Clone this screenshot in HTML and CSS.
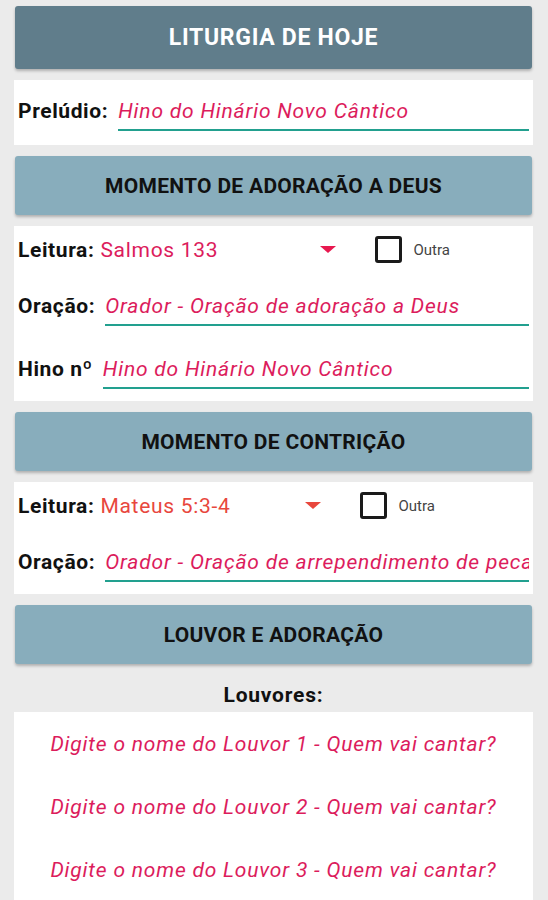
FILE: index.html
```html
<!doctype html>
<html>
    <head>
        <meta charset="utf-8">
        <title>Liturgia de Hoje</title>
        <link rel="stylesheet" href="styles.css">
    </head>
    <body>
        <div class="page">
            <div class="bar bar-main">LITURGIA DE HOJE</div>

            <div class="card">
                <div class="field-row first">
                    <span class="label">Prelúdio:</span>
                    <input class="field" type="text" value="Hino do Hinário Novo Cântico">
                </div>
            </div>

            <div class="bar">MOMENTO DE ADORAÇÃO A DEUS</div>

            <div class="card">
                <div class="row">
                    <span class="label">Leitura:</span>
                    <div class="spinner wide">
                        <span>Salmos 133</span>
                        <i class="arrow"></i>
                    </div>
                    <span class="check"></span>
                    <span class="check-text">Outra</span>
                </div>
                <div class="field-row">
                    <span class="label">Oração:</span>
                    <input class="field" type="text" value="Orador - Oração de adoração a Deus">
                </div>
                <div class="field-row">
                    <span class="label">Hino nº</span>
                    <input class="field" type="text" value="Hino do Hinário Novo Cântico">
                </div>
            </div>

            <div class="bar">MOMENTO DE CONTRIÇÃO</div>

            <div class="card">
                <div class="row">
                    <span class="label">Leitura:</span>
                    <div class="spinner narrow orange">
                        <span>Mateus 5:3-4</span>
                        <i class="arrow"></i>
                    </div>
                    <span class="check"></span>
                    <span class="check-text">Outra</span>
                </div>
                <div class="field-row">
                    <span class="label">Oração:</span>
                    <input class="field" type="text" value="Orador - Oração de arrependimento de pecados">
                </div>
            </div>

            <div class="bar">LOUVOR E ADORAÇÃO</div>
            <div class="sub-title">Louvores:</div>

            <div class="card songs">
                <input class="song" type="text" value="Digite o nome do Louvor 1 - Quem vai cantar?">
                <input class="song" type="text" value="Digite o nome do Louvor 2 - Quem vai cantar?">
                <input class="song" type="text" value="Digite o nome do Louvor 3 - Quem vai cantar?">
            </div>
        </div>
    </body>
</html>
```
FILE: styles.css
```css
*{margin:0;padding:0;box-sizing:border-box;}
body{
    background:#ebebeb;
    font-family:Roboto,"Liberation Sans",sans-serif;
    color:#111;
}
.page{
    width:519px;
    margin-left:14px;
    padding-top:6px;
}
.bar{
    height:59px;
    margin:0 1px 11px;
    background:#88adbc;
    border-radius:3px;
    box-shadow:0 2px 3px rgba(0,0,0,0.25);
    display:flex;
    align-items:center;
    justify-content:center;
    font-size:21px;
    font-weight:bold;
    letter-spacing:0.3px;
    color:#111;
}
.bar-main{
    height:63px;
    background:#607d8b;
    color:#fff;
    font-size:23px;
    letter-spacing:0.7px;
}
.card{
    background:#fff;
    margin-bottom:11px;
    padding-bottom:2px;
}
.row{
    height:47px;
    display:flex;
    align-items:center;
    padding-left:4px;
}
.field-row{
    display:flex;
    align-items:flex-end;
    padding:21px 4px 10px;
}
.field-row.first{padding:19px 4px 12px;}
.label{
    font-size:21px;
    font-weight:bold;
    letter-spacing:0.6px;
    line-height:24px;
    padding-bottom:8px;
    margin-right:10px;
    white-space:nowrap;
}
.row .label{padding-bottom:0;margin-right:6px;}
.field{
    flex:1;
    min-width:0;
    border:none;
    border-bottom:2px solid #22a08f;
    outline:none;
    background:transparent;
    font-family:inherit;
    font-size:21px;
    font-style:italic;
    letter-spacing:0.8px;
    line-height:24px;
    height:32px;
    padding:0 0 6px;
    color:#dc1c5c;
}
.spinner{
    display:flex;
    align-items:center;
    justify-content:space-between;
    font-size:21px;
    letter-spacing:0.7px;
    color:#dc1c5c;
    padding-right:4px;
}
.spinner.wide{width:240px;}
.spinner.narrow{width:225px;}
.spinner.orange{color:#e8473d;}
.arrow{
    width:0;
    height:0;
    border-left:8px solid transparent;
    border-right:8px solid transparent;
    border-top:7px solid #e8184f;
}
.spinner.orange .arrow{border-top-color:#e8473d;}
.check{
    width:27px;
    height:27px;
    border:3px solid #1a1a1a;
    border-radius:3px;
    margin-left:35px;
}
.check-text{
    font-size:15px;
    color:#444;
    margin-left:11px;
}
.sub-title{
    text-align:center;
    font-size:21px;
    font-weight:bold;
    letter-spacing:0.8px;
    line-height:26px;
    padding:18px 0 4px;
    margin-top:-11px;
}
.songs{padding:0;}
.song{
    display:block;
    width:100%;
    height:63px;
    border:none;
    outline:none;
    background:transparent;
    text-align:center;
    font-family:inherit;
    font-size:21px;
    font-style:italic;
    letter-spacing:0.8px;
    color:#dc1c5c;
}
```
